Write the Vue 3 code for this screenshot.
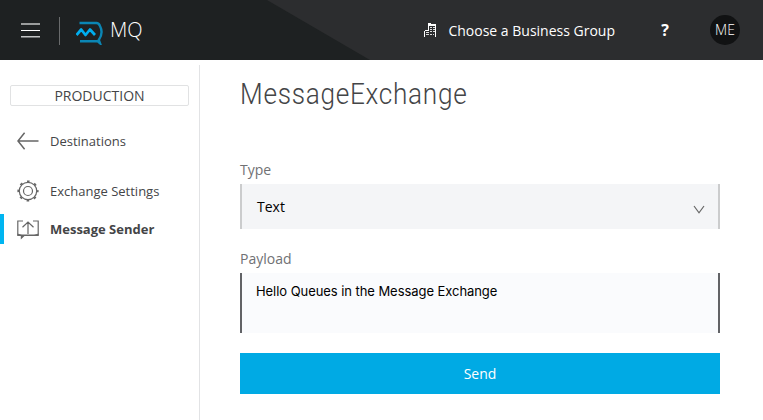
<script setup>
import { ref } from 'vue'

const type = ref('Text')
const payload = ref('Hello Queues in the Message Exchange')
</script>

<template>
  <div class="page">
    <header class="topbar">
      <svg class="menu" width="19" height="15" viewBox="0 0 19 15">
        <path d="M0 1H19M0 13.8H19" stroke="#c3c5c5" stroke-width="1.6" />
        <path d="M0 7.5H19" stroke="#fff" stroke-width="1" />
      </svg>
      <span class="divider"></span>
      <svg class="logo" width="28" height="24" viewBox="0 0 28 24" fill="none">
        <path d="M3.500 2H20.500Q22.800 2 24 5C26.300 9.500 26 14.500 22.800 19L24 22.300L21.500 20.200H4" stroke="#0b86b4" stroke-width="2.400" />
        <path d="M.5 14L5.200 8.500L9.500 14L14 8.500L19 14" stroke="#00aeef" stroke-width="2.700" stroke-linejoin="round" />
      </svg>
      <span class="brand">MQ</span>
      <div class="group">
        <svg width="13" height="14" viewBox="0 0 13 14" shape-rendering="crispEdges">
          <path d="M0 14V8H1V7H4V0H7V1H12V14H11V3H5V8H1V14Z" fill="#fff" />
          <path d="M6 4.500h2M9 4.500h2M6 6.500h2M9 6.500h2M6 8.500h2M9 8.500h2M2 9.500h3M2 11.500h3M6 11.500h2M9 11.500h1" stroke="#ddd" />
        </svg>
        <span class="group-name">Choose a Business Group</span>
      </div>
      <span class="help">?</span>
      <span class="avatar">ME</span>
    </header>

    <div class="body">
      <nav class="sidebar">
        <div class="env">PRODUCTION</div>
        <a class="item back">
          <svg width="22" height="18" viewBox="0 0 22 18" fill="none" stroke="#666" stroke-width="1.500">
            <path d="M21.500 9H1.200M7.600 .700L1 9L7.600 17.300" />
          </svg>
          <span>Destinations</span>
        </a>
        <a class="item settings">
          <svg width="22" height="22" viewBox="0 0 22 22" fill="none" stroke="#666">
            <circle cx="11" cy="11" r="8.700" stroke-width="1.200" />
            <circle cx="11" cy="11" r="4.500" stroke-width="1.200" />
            <circle cx="11" cy="11" r="9.700" stroke-width="1.800" stroke-dasharray="2.600 5.018" stroke-dashoffset="1.300" />
          </svg>
          <span>Exchange Settings</span>
        </a>
        <a class="item sender active">
          <svg width="22" height="20" viewBox="0 0 22 20" fill="none" stroke="#666" stroke-width="1.200">
            <path d="M6 1H.8V15.200H21.200V1H16M11 14V2.500M5.500 7.200L11 2L16.500 7.200" />
            <path d="M.5 13.500L5 15H17L21.500 13.500V16H7.500L3.800 19.500V16H.5Z" fill="#666" stroke="none" />
          </svg>
          <span>Message Sender</span>
        </a>
      </nav>

      <main class="content">
        <h1>MessageExchange</h1>
        <div class="label">Type</div>
        <div class="select">
          <span>{{ type }}</span>
          <svg width="12" height="9" viewBox="0 0 12 9" fill="none" stroke="#666" stroke-width="1.200">
            <path d="M1 1L6 7.800L11 1" />
          </svg>
        </div>
        <div class="label payload-label">Payload</div>
        <div class="payload">{{ payload }}</div>
        <button class="send">Send</button>
      </main>
    </div>
  </div>
</template>

<style>
body {
  margin: 0;
  background: #fff;
}
</style>

<style scoped>
.page {
  width: 763px;
  height: 420px;
  overflow: hidden;
  background: #fff;
  font-family: "Open Sans", "Noto Sans", sans-serif;
  font-size: 14px;
  color: #444547;
}
.topbar {
  display: flex;
  align-items: center;
  box-sizing: border-box;
  height: 60px;
  padding: 0 23px 0 21px;
  color: #fff;
  background: #2c2d2f;
  position: relative;
  z-index: 0;
}
.topbar::before {
  content: "";
  position: absolute;
  inset: 0;
  z-index: -1;
  background: #1e2122;
  clip-path: polygon(0 0, 267px 0, 370px 100%, 0 100%);
}
.menu {
  margin-top: 1px;
}
.divider {
  width: 1px;
  height: 28px;
  margin: 2px 16px 0 19px;
  background: #696b6c;
}
.logo {
  margin-top: 6px;
}
.brand {
  margin-left: 6px;
  font-size: 20px;
  font-weight: 300;
  line-height: 28px;
}
.group {
  display: flex;
  align-items: center;
  gap: 11px;
  margin-left: auto;
  line-height: 20px;
  white-space: nowrap;
}
.group-name {
  padding-top: 2px;
}
.help {
  width: 10px;
  margin: 0 0 0 45px;
  font-size: 16px;
  font-weight: 700;
  text-align: center;
}
.avatar {
  width: 30px;
  height: 30px;
  margin-left: 40px;
  border-radius: 50%;
  background: #111213;
  font-weight: 300;
  line-height: 30px;
  text-align: center;
}
.body {
  display: flex;
  height: 360px;
}
.sidebar {
  box-sizing: border-box;
  width: 200px;
  margin-top: 5px;
  padding-top: 20px;
  border-right: 1px solid #e2e3e5;
  font-size: 13px;
}
.env {
  box-sizing: border-box;
  width: 179px;
  height: 21px;
  margin-left: 10px;
  border: 1px solid #e1e2e3;
  border-radius: 2px;
  font-size: 14px;
  line-height: 20px;
  text-align: center;
}
.item {
  display: flex;
  align-items: center;
  box-sizing: border-box;
  height: 30px;
  padding-left: 17px;
  gap: 11px;
  line-height: 20px;
}
.back {
  margin-top: 20px;
}
.settings {
  margin-top: 20px;
}
.sender {
  margin-top: 8px;
}
.sender svg {
  margin-top: 2px;
}
.active {
  padding-left: 13px;
  border-left: 4px solid #00b5f1;
  font-weight: 700;
}
.content {
  width: 480px;
  padding: 14px 0 0 40px;
}
h1 {
  height: 40px;
  margin: 0;
  font-family: Roboto, sans-serif;
  font-size: 29px;
  font-weight: 300;
  line-height: 40px;
  letter-spacing: 0.800px;
  white-space: nowrap;
  transform: scaleX(0.903);
  transform-origin: left;
}
.label {
  margin-top: 46px;
  color: #707174;
  line-height: 20px;
}
.select {
  display: flex;
  align-items: center;
  justify-content: space-between;
  box-sizing: border-box;
  height: 45px;
  margin-top: 4px;
  padding: 0 13px 0 15px;
  border: solid #cbcccd;
  border-width: 0 2px;
  background: #f4f5f7;
  color: #000;
}
.select svg {
  margin-top: 6px;
}
.payload-label {
  margin-top: 20px;
}
.payload {
  box-sizing: border-box;
  height: 60px;
  margin-top: 4px;
  padding: 8px 14px;
  border: solid #626366;
  border-width: 0 2px;
  background: #fafbfd;
  color: #000;
  font-family: Inter, sans-serif;
  font-size: 13px;
  letter-spacing: -0.060px;
  line-height: 20px;
}
.send {
  display: block;
  width: 100%;
  height: 41px;
  margin: 20px 0 0;
  padding: 0;
  border: 0;
  background: #00aae4;
  color: #fff;
  font: 14px/41px "Open Sans", sans-serif;
}
</style>
